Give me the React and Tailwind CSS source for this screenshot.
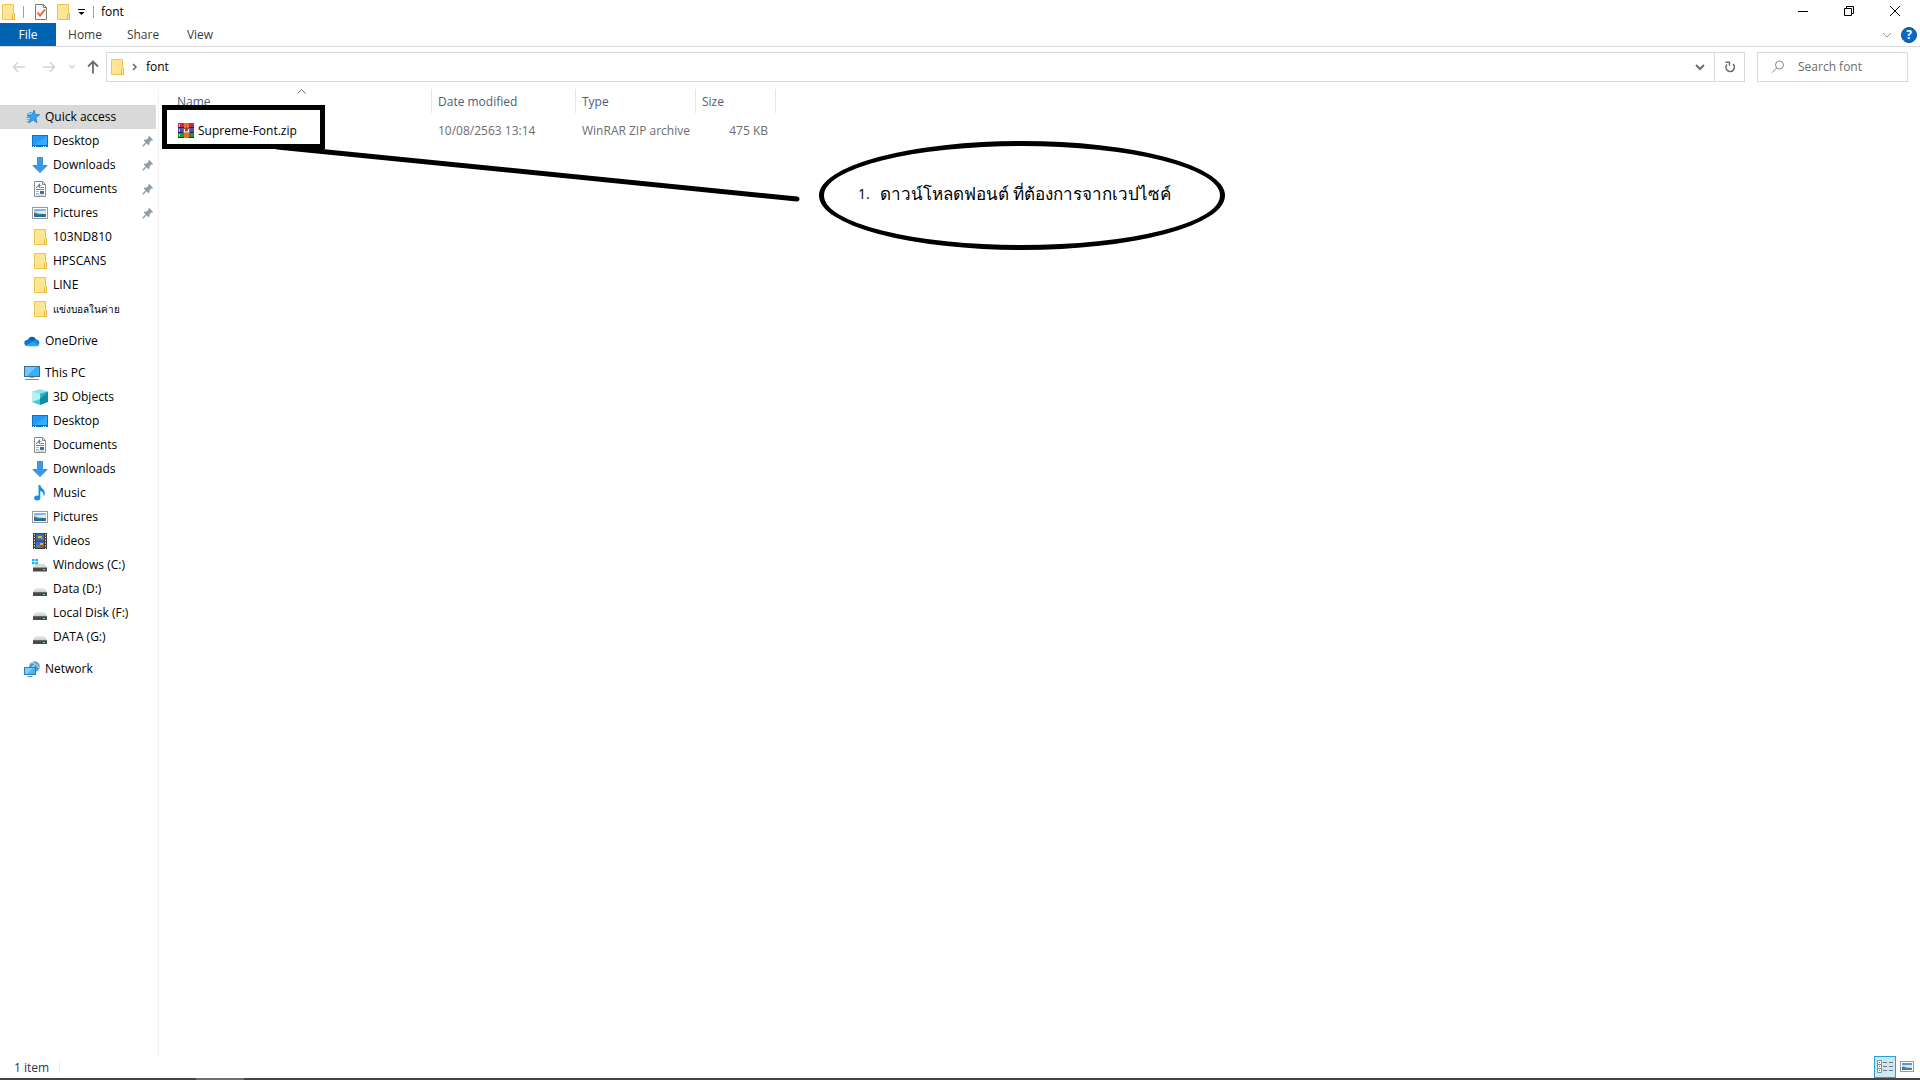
import React from "react"

const FolderIcon = () => (
    <svg width="16" height="16" viewBox="0 0 16 16" className="shrink-0">
        <path d="M2.5 .5h11v9h1v6h-12z" fill="#ffe594" stroke="#efc64d" />
        <path d="M12.5 15.5v-5l1-1h1v6z" fill="#fff0b8" stroke="#e5b53a" />
    </svg>
)

const StarIcon = () => (
    <svg width="16" height="16" viewBox="0 0 16 16" className="shrink-0">
        <path d="M10.2 1.200l1 4.200 4.500.3-3.800 2.900 1 5.200-3.700-2.800-4.600 3 1.900-4.900L3 6.200l4.900-.5z" fill="#2fa4f7" stroke="#1778c6" strokeWidth=".7" />
        <path d="M5 3.500h3M3 5h4M2 8.500h3.500M3 10.500h2.500M2.500 12.500h2.500" stroke="#4aa9ea" strokeWidth=".9" />
    </svg>
)

const DesktopIcon = () => (
    <svg width="16" height="16" viewBox="0 0 16 16" className="shrink-0">
        <rect x=".5" y="2.5" width="15" height="11" fill="#1e9cff" stroke="#0f72c4" />
        <path d="M1 13L15 3v10z" fill="#35adff" />
        <path d="M1 12.5h14" stroke="#0b6cbd" />
        <path d="M1 13.500h1M3 13.500h1M11 13.500h1M13 13.500h1" stroke="#fff" />
    </svg>
)

const DownloadIcon = () => (
    <svg width="16" height="16" viewBox="0 0 16 16" className="shrink-0">
        <path d="M5.5 .5h5v8h4.7L8 15.6.8 8.5h4.7z" fill="#3b97e8" stroke="#2b7fcd" strokeWidth=".8" />
    </svg>
)

const DocumentIcon = () => (
    <svg width="16" height="16" viewBox="0 0 16 16" className="shrink-0">
        <path d="M2.5 .5h8l3 3v12h-11z" fill="#fff" stroke="#8c8c8c" />
        <path d="M10.5 .5v3h3" fill="none" stroke="#8c8c8c" />
        <path d="M4 6.500h1L7.500 2.800v4M5.500 5.300h2M8.500 4.500h1M8.500 6.500h3.500M4 8.500h8" fill="none" stroke="#2e8fdc" />
        <path d="M4 10.5h3M4 12.5h3M4 14h8" stroke="#a5a5a5" strokeWidth=".8" />
        <rect x="8" y="10" width="4" height="3" fill="#2f6f9c" />
        <path d="M8 12h4v1H8z" fill="#4c8b63" />
    </svg>
)

const PictureIcon = () => (
    <svg width="16" height="16" viewBox="0 0 16 16" className="shrink-0">
        <rect x=".5" y="2.5" width="15" height="11" fill="#fff" stroke="#9a9a9a" />
        <rect x="2" y="4" width="12" height="8" fill="#d9ecfb" />
        <path d="M2 4h12v1.500L2 6.500z" fill="#79b4ee" />
        <path d="M2 7.500c2-.3 3 .8 5 1.300l7 .2v3H2z" fill="#3f7d7a" />
        <path d="M2 10.200l12-.6V12H2z" fill="#2f6a9c" />
    </svg>
)

const OneDriveIcon = () => (
    <svg width="16" height="16" viewBox="0 0 16 16" className="shrink-0">
        <path d="M4 7a4.3 4.3 0 0 1 8.2-.6L9.5 9z" fill="#0a5cb8" />
        <path d="M3 13a3 3 0 0 1-.5-5.9A4 4 0 0 1 6.6 6.6L11 9.5 5 13z" fill="#1175cf" />
        <path d="M8.5 8.2a4 4 0 0 1 4.2-1.8A3.4 3.4 0 0 1 13 13H6z" fill="#1a86dd" />
        <path d="M1.5 12.2l7.2-3.4 6.6 3A3 3 0 0 1 13 13.2H3a3 3 0 0 1-1.5-1z" fill="#2ba6ee" />
    </svg>
)

const PcIcon = () => (
    <svg width="16" height="16" viewBox="0 0 16 16" className="shrink-0">
        <rect x=".5" y="1.5" width="15" height="10" fill="#39aefb" stroke="#37708f" />
        <path d="M1 2h11L3 11H1z" fill="#73c8ff" />
        <path d="M6 12.5h4" stroke="#9ab0bd" />
        <path d="M1 14.5h14" stroke="#7f97a6" />
    </svg>
)

const CubeIcon = () => (
    <svg width="16" height="16" viewBox="0 0 16 16" className="shrink-0">
        <path d="M0 2.500L8 0l8 2.500L8 5z" fill="#8fe3ec" />
        <path d="M0 2.500L8 5v11l-8-3z" fill="#43c8d8" />
        <path d="M16 2.500L8 5v11l8-3z" fill="#0f8da6" />
        <path d="M0 2.500L8 5v5L0 13z" fill="#b9f1f5" />
        <path d="M16 2.500L8 5v5z" fill="#2fb3c7" />
    </svg>
)

const MusicIcon = () => (
    <svg width="16" height="16" viewBox="0 0 16 16" className="shrink-0">
        <ellipse cx="5.2" cy="13" rx="3.1" ry="2.5" fill="#0d93ea" />
        <path d="M6.5 0h1.8c.2 3.2 4.5 4 4.6 8 0 1.6-.8 2.8-1.5 3.5.8-3-.8-4.8-3.1-5.5v7H6.5z" fill="#0d93ea" />
    </svg>
)

const VideoIcon = () => (
    <svg width="16" height="16" viewBox="0 0 16 16" className="shrink-0">
        <rect x="1" y="0" width="14" height="16" fill="#3c3c40" />
        <path d="M2.5 1v15M13.5 1v15" stroke="#e8e8e8" strokeDasharray="1.4 1.4" />
        <rect x="4" y="1" width="8" height="6.5" fill="#3470c7" />
        <rect x="4" y="8.5" width="8" height="6.5" fill="#3470c7" />
        <path d="M6 3h4v2H6zM8 10h3v2H8z" fill="#f0b429" />
        <path d="M5 5h3v2H5zM9 12h3v2H9z" fill="#c93d32" />
        <path d="M9 5h3v2H9zM4 12h4v2H4z" fill="#4e9a51" />
    </svg>
)

const DriveIcon = () => (
    <svg width="16" height="16" viewBox="0 0 16 16" className="shrink-0">
        <path d="M3.5 7.500h9L15 11H1z" fill="#d9dadb" />
        <rect x="1" y="11" width="14" height="4" fill="#46484a" />
        <path d="M1 11.300h14" stroke="#8a8c8e" strokeWidth=".6" />
        <rect x="11" y="13" width="2" height="1" fill="#56e05e" />
    </svg>
)

const WinDriveIcon = () => (
    <svg width="16" height="16" viewBox="0 0 16 16" className="shrink-0">
        <path d="M4 7h8.500L15 10.500H1z" fill="#d9dadb" />
        <rect x="1" y="10.500" width="14" height="4" fill="#46484a" />
        <rect x="11" y="12" width="2" height="1" fill="#56e05e" />
        <path d="M0 2h2.600v2.200H0zM3.400 2H6v2.200H3.400zM0 5h2.600v2.200H0zM3.400 5H6v2.200H3.400z" fill="#12b4f2" />
    </svg>
)

const NetworkIcon = () => (
    <svg width="16" height="16" viewBox="0 0 16 16" className="shrink-0">
        <circle cx="10.500" cy="5.500" r="5.300" fill="#4e9cc4" />
        <path d="M7 2.500c2-1.500 4-.8 4 .8s-2 1.700-3 3.200M13 2.500c-1 2 1.500 3 1.800 4.500" fill="none" stroke="#b8dff0" strokeWidth="1.200" />
        <rect x=".5" y="6.500" width="11" height="7" fill="#4cb5f9" stroke="#2d7fb5" />
        <path d="M1 7h8l-6 6H1z" fill="#7fcdfd" />
        <path d="M3.500 15.500h5" stroke="#6f8c9e" />
    </svg>
)

const PinIcon = () => (
    <svg width="12" height="12" viewBox="0 0 12 12" className="shrink-0">
        <path d="M7 .8L11.2 5l-1.2.6-.7-.2-1.8 1.8.1 2.2-1 .9L1.7 5.4l.9-1 2.200.1 1.800-1.800-.2-.7z" fill="#8f9ba5" />
        <path d="M4.200 7.800L.8 11.200" stroke="#8f9ba5" strokeWidth="1.400" />
    </svg>
)

const WinrarIcon = () => (
    <svg width="16" height="16" viewBox="0 0 16 16" className="shrink-0">
        <rect width="16" height="5" fill="#c4285a" />
        <rect y="5" width="16" height="5" fill="#4f4fb4" />
        <rect y="10" width="16" height="5" fill="#1d963f" />
        <path d="M0 4.500h16M0 9.500h16M0 14.500h16" stroke="#33203f" />
        <path d="M1.500 1v2.500M1.500 6v2.500M1.500 11v2.500" stroke="#f3d33a" />
        <rect x="6" width="5" height="15" fill="#e8701f" />
        <rect x="5" y="5" width="7" height="5" fill="#c9451e" />
        <path d="M6.500 6v3h4V6" fill="none" stroke="#fff" strokeWidth="1.200" />
        <path d="M8.500 4v3.500" stroke="#7a3d12" />
    </svg>
)

const quickAccess = [
    { label: "Desktop", icon: DesktopIcon, pinned: true },
    { label: "Downloads", icon: DownloadIcon, pinned: true },
    { label: "Documents", icon: DocumentIcon, pinned: true },
    { label: "Pictures", icon: PictureIcon, pinned: true },
    { label: "103ND810", icon: FolderIcon },
    { label: "HPSCANS", icon: FolderIcon },
    { label: "LINE", icon: FolderIcon },
    { label: "แข่งบอลในค่าย", icon: FolderIcon, small: true },
]

const thisPc = [
    { label: "3D Objects", icon: CubeIcon },
    { label: "Desktop", icon: DesktopIcon },
    { label: "Documents", icon: DocumentIcon },
    { label: "Downloads", icon: DownloadIcon },
    { label: "Music", icon: MusicIcon },
    { label: "Pictures", icon: PictureIcon },
    { label: "Videos", icon: VideoIcon },
    { label: "Windows (C:)", icon: WinDriveIcon },
    { label: "Data (D:)", icon: DriveIcon },
    { label: "Local Disk (F:)", icon: DriveIcon },
    { label: "DATA (G:)", icon: DriveIcon },
]

function RootItem({ icon: Icon, label, active }) {
    return (
        <a href="#" className={active ? "flex h-6 items-center gap-[5px] bg-[#d9d9d9] pl-6" : "flex h-6 items-center gap-[5px] pl-6"}>
            <Icon />
            <span>{label}</span>
        </a>
    )
}

function ChildItem({ icon: Icon, label, pinned, small }) {
    return (
        <a href="#" className="flex h-6 items-center gap-[5px] pr-[2px] pl-8">
            <Icon />
            <span className={small ? "flex-1 text-[10px] whitespace-nowrap" : "flex-1 whitespace-nowrap"}>{label}</span>
            {pinned && <PinIcon />}
        </a>
    )
}

function TitleBar() {
    return (
        <header className="flex h-[23px] items-center">
            <FolderIcon />
            <span className="ml-[7px] h-3 w-px bg-gray-400" />
            <button type="button" aria-label="Properties" className="ml-[9px]">
                <svg width="16" height="18" viewBox="0 0 16 18">
                    <path d="M2.500 1.500h8l3 3v12h-11z" fill="#f8f8f8" stroke="#7b7b7b" />
                    <path d="M10.500 1.500v3h3" fill="none" stroke="#7b7b7b" />
                    <path d="M4.500 9.500l2.500 3 5-6" fill="none" stroke="#e8612c" strokeWidth="1.800" />
                </svg>
            </button>
            <button type="button" aria-label="New folder" className="ml-[6px]">
                <FolderIcon />
            </button>
            <button type="button" aria-label="Customize toolbar" className="ml-[7px]">
                <svg width="8" height="8" viewBox="0 0 8 8">
                    <path d="M0 1.500h7" stroke="#000" />
                    <path d="M.5 4h6l-3 3z" fill="#000" />
                </svg>
            </button>
            <span className="ml-[7px] h-3 w-px bg-gray-400" />
            <h1 className="ml-[7px]">font</h1>
            <div className="ml-auto flex self-stretch pr-[2px] pb-[2px]">
                <button type="button" aria-label="Minimize" className="flex w-[46px] items-center justify-center">
                    <svg width="10" height="10" viewBox="0 0 10 10">
                        <path d="M0 5.500h10" stroke="#000" />
                    </svg>
                </button>
                <button type="button" aria-label="Restore" className="flex w-[46px] items-center justify-center">
                    <svg width="10" height="10" viewBox="0 0 10 10" fill="none" stroke="#000">
                        <path d="M.5 2.500h7v7h-7zM2.500 2.500v-2h7v7h-2" />
                    </svg>
                </button>
                <button type="button" aria-label="Close" className="flex w-[46px] items-center justify-center">
                    <svg width="10" height="10" viewBox="0 0 10 10" stroke="#000">
                        <path d="M0 0l10 10M10 0L0 10" />
                    </svg>
                </button>
            </div>
        </header>
    )
}

function Ribbon() {
    return (
        <div className="flex h-6 border-b border-[#dadbdc] text-[#3b3b3b]">
            <button type="button" className="w-14 bg-[#0063b1] pt-px text-white">File</button>
            <button type="button" className="w-[58px] pt-px">Home</button>
            <button type="button" className="w-[58px] pt-px">Share</button>
            <button type="button" className="w-14 pt-px">View</button>
            <div className="ml-auto flex items-center gap-[9px] pr-[3px]">
                <button type="button" aria-label="Expand the ribbon">
                    <svg width="10" height="6" viewBox="0 0 10 6">
                        <path d="M1 1l4 4 4-4" fill="none" stroke="#9a9a9a" />
                    </svg>
                </button>
                <button type="button" aria-label="Help" className="flex size-4 items-center justify-center rounded-full border border-[#0c4f94] bg-[#0a68c6] text-[12px] font-bold text-white">
                    ?
                </button>
            </div>
        </div>
    )
}

function AddressBar() {
    return (
        <div className="flex h-[42px] items-start pt-[5px] pr-3">
            <div className="flex h-[30px] w-[106px] shrink-0 items-center pl-3">
                <button type="button" aria-label="Back">
                    <svg width="14" height="12" viewBox="0 0 14 12" fill="none" stroke="#d3d3d3" strokeWidth="1.400">
                        <path d="M6 1L1.500 6 6 11M1.500 6H13" />
                    </svg>
                </button>
                <button type="button" aria-label="Forward" className="ml-4">
                    <svg width="14" height="12" viewBox="0 0 14 12" fill="none" stroke="#d3d3d3" strokeWidth="1.400">
                        <path d="M8 1l4.500 5L8 11M12.500 6H1" />
                    </svg>
                </button>
                <button type="button" aria-label="Recent locations" className="ml-3">
                    <svg width="8" height="6" viewBox="0 0 8 6" fill="none" stroke="#d3d3d3" strokeWidth="1.400">
                        <path d="M1 1l3 3 3-3" />
                    </svg>
                </button>
                <button type="button" aria-label="Up" className="ml-[11px]">
                    <svg width="12" height="14" viewBox="0 0 12 14" fill="none" stroke="#6b6b6b" strokeWidth="1.800">
                        <path d="M1 6.500L6 1.500l5 5M6 2v11.500" />
                    </svg>
                </button>
            </div>
            <div className="flex h-[30px] flex-1 items-center border border-[#d9d9d9] pl-[2px]">
                <FolderIcon />
                <svg width="6" height="8" viewBox="0 0 6 8" fill="none" stroke="#666" strokeWidth="1.500" className="ml-[7px]">
                    <path d="M1 1l3 3-3 3" />
                </svg>
                <span className="ml-2">font</span>
                <button type="button" aria-label="Previous locations" className="mr-[9px] ml-auto">
                    <svg width="10" height="8" viewBox="0 0 10 8" fill="none" stroke="#6b6b6b" strokeWidth="2">
                        <path d="M1 2l4 4 4-4" />
                    </svg>
                </button>
                <button type="button" aria-label="Refresh" className="flex h-full w-[30px] items-center justify-center border-l border-[#d9d9d9]">
                    <svg width="12" height="12" viewBox="0 0 12 12" fill="none" stroke="#6b6b6b" strokeWidth="1.600">
                        <path d="M9 3.200A4.200 4.200 0 1 1 3 3.500" />
                        <path d="M1.500 1.200H5.500v3.600" strokeWidth="1.400" />
                    </svg>
                </button>
            </div>
            <label className="ml-3 flex h-[30px] w-[151px] items-center border border-[#d9d9d9] pl-[13px]">
                <svg width="14" height="14" viewBox="0 0 14 14" fill="none" stroke="#8b8494" className="shrink-0">
                    <circle cx="8.500" cy="5" r="4" />
                    <path d="M5.700 8L1 12.700" />
                </svg>
                <input type="search" aria-label="Search font" placeholder="Search font" className="ml-[13px] w-full min-w-0 outline-none placeholder:text-[#6d6d6d]" />
            </label>
        </div>
    )
}

function Sidebar() {
    return (
        <nav className="w-[159px] shrink-0 border-r border-[#f3f3f3] pt-4 pr-[2px]">
            <RootItem icon={StarIcon} label="Quick access" active />
            {quickAccess.map((item) => (
                <ChildItem key={item.label} {...item} />
            ))}
            <div className="mt-2">
                <RootItem icon={OneDriveIcon} label="OneDrive" />
            </div>
            <div className="mt-2">
                <RootItem icon={PcIcon} label="This PC" />
                {thisPc.map((item) => (
                    <ChildItem key={item.label} {...item} />
                ))}
            </div>
            <div className="mt-2">
                <RootItem icon={NetworkIcon} label="Network" />
            </div>
        </nav>
    )
}

function FileList() {
    return (
        <table className="w-[617px] table-fixed border-separate border-spacing-0 text-left">
            <thead>
                <tr className="h-6 text-[#4c607a]">
                    <th className="w-[273px] border-r border-[#e5e5e5] pt-[2px] pl-[18px] font-normal">Name</th>
                    <th className="w-36 border-r border-[#e5e5e5] pt-[2px] pl-[6px] font-normal">Date modified</th>
                    <th className="w-[120px] border-r border-[#e5e5e5] pt-[2px] pl-[6px] font-normal">Type</th>
                    <th className="w-20 border-r border-[#e5e5e5] pt-[2px] pl-[6px] font-normal">Size</th>
                </tr>
            </thead>
            <tbody>
                <tr className="text-[#6d6d6d]">
                    <td className="pt-[10px] pl-[19px] text-black">
                        <div className="flex items-center gap-1">
                            <WinrarIcon />
                            Supreme-Font.zip
                        </div>
                    </td>
                    <td className="pt-[10px] pl-[6px]">10/08/2563 13:14</td>
                    <td className="pt-[10px] pl-[6px] whitespace-nowrap">WinRAR ZIP archive</td>
                    <td className="pt-[10px] pr-2 text-right">475 KB</td>
                </tr>
            </tbody>
        </table>
    )
}

// Hand drawn marks that lie over the file list
function Annotations() {
    return (
        <>
            <div className="absolute top-4 left-[3px] h-11 w-[163px] border-5 border-black" />
            <svg width="530" height="60" viewBox="0 0 530 60" className="absolute top-[56px] left-[114px]">
                <path d="M4 2L524 54" stroke="#000" strokeWidth="5" strokeLinecap="round" />
            </svg>
            <div className="absolute top-[52px] left-[660px] flex h-[109px] w-[406px] items-center rounded-[50%] border-5 border-black pb-1 pl-[34px] text-[17px] whitespace-nowrap">
                <span className="w-[22px] text-sm">1.</span>
                <span>ดาวน์โหลดฟอนต์ ที่ต้องการจากเวปไซค์</span>
            </div>
        </>
    )
}

export default function App() {
    return (
        <div className="flex min-h-screen flex-col bg-white font-['Open_Sans','Noto_Sans',sans-serif] text-[12px] leading-4 text-black">
            <TitleBar />
            <Ribbon />
            <AddressBar />
            <div className="flex flex-1">
                <Sidebar />
                <main className="relative flex-1">
                    <FileList />
                    <svg width="9" height="5" viewBox="0 0 9 5" className="absolute top-0 left-[138px]">
                        <path d="M.5 4.500l4-4 4 4" fill="none" stroke="#6b6b6b" />
                    </svg>
                    <Annotations />
                </main>
            </div>
            <footer className="flex h-[22px] items-center pr-[6px] pl-[14px] text-[#1e395b]">
                <span className="pt-[2px]">1 item</span>
                <span className="ml-[10px] h-[11px] w-px bg-[#ececec]" />
                <button type="button" aria-label="Details view" className="ml-auto flex h-[22px] w-[22px] items-center justify-center border border-[#26a0da] bg-[#cbe8f6]">
                    <svg width="16" height="14" viewBox="0 0 16 14" fill="none">
                        <path d="M.5 .5h4v4h-4zM.5 4.500h4v4h-4zM.5 8.500h4v4h-4z" fill="#fff" stroke="#8c8c8c" />
                        <path d="M6 2.500h4M12 2.500h4M6 6.500h4M12 6.500h4M6 10.500h4M12 10.500h4" stroke="#6f7a85" />
                        <path d="M2 2.500h1" stroke="#555" />
                        <path d="M2 6.500h1" stroke="#2e8fdc" />
                        <path d="M2 10.500h1" stroke="#d03030" />
                    </svg>
                </button>
                <button type="button" aria-label="Large icons view" className="ml-1">
                    <svg width="14" height="12" viewBox="0 0 14 12">
                        <rect x=".5" y=".5" width="13" height="10" fill="#fff" stroke="#9a9a9a" />
                        <rect x="2" y="2" width="10" height="7" fill="#cfe3f8" />
                        <path d="M2 2h10v2H2z" fill="#5c95dd" />
                        <path d="M2 6c2-.5 3 .4 5 .8l5 .2v2H2z" fill="#4b7d70" />
                    </svg>
                </button>
            </footer>
            <div className="h-[2px] bg-[#444] pl-[196px]">
                <div className="h-full w-12 bg-[#6e6e6e]" />
            </div>
        </div>
    )
}
